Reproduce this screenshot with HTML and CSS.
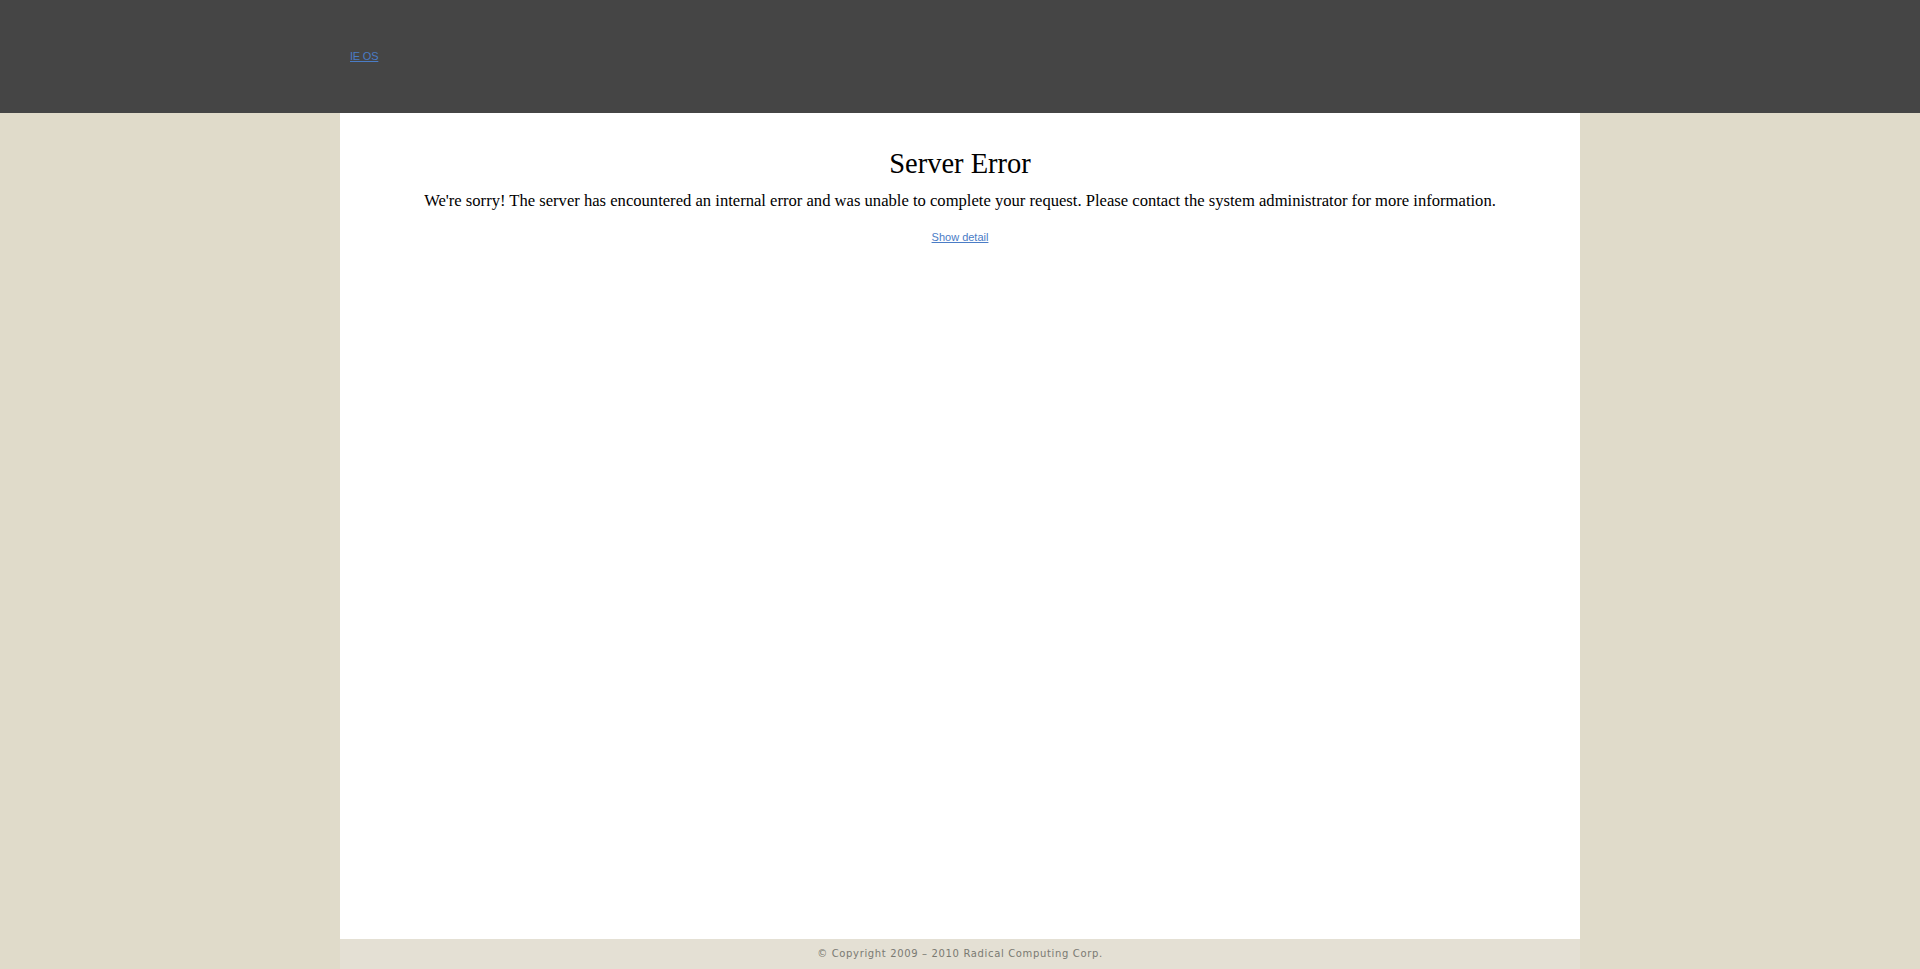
FILE: index.html
```html
<!DOCTYPE html>
<html>
<head>
<meta charset="utf-8">
<title>Server Error</title>
<link rel="stylesheet" href="styles.css">
</head>
<body>
<div class="header">
  <div class="header-inner">
    <a class="logo-link" href="#">IE OS</a>
  </div>
</div>
<div class="page">
  <h1 class="title">Server Error</h1>
  <p class="message">We're sorry! The server has encountered an internal error and was unable to complete your request. Please contact the system administrator for more information.</p>
  <a class="detail-link" href="#">Show detail</a>
</div>
<div class="footer">&copy; Copyright 2009 &ndash; 2010 Radical Computing Corp.</div>
</body>
</html>
```

FILE: styles.css
```css
html, body {
  margin: 0;
  padding: 0;
}
body {
  background: #e0dbca;
  font-family: "Liberation Sans", Arial, sans-serif;
}
.header {
  background: #454545;
  height: 113px;
}
.header-inner {
  width: 1240px;
  margin: 0 auto;
  padding: 46px 0 0 10px;
  box-sizing: border-box;
}
.logo-link {
  color: #4a7cc6;
  font-size: 11px;
  letter-spacing: -0.2px;
}
.page {
  width: 1240px;
  margin: 0 auto;
  background: #ffffff;
  height: 826px;
  box-sizing: border-box;
  padding-top: 35px;
  text-align: center;
}
.title {
  font-family: "Liberation Serif", Georgia, serif;
  font-weight: normal;
  font-size: 28.5px;
  line-height: 32px;
  margin: 0 0 11px 0;
  color: #000;
}
.message {
  font-family: "Liberation Serif", Georgia, serif;
  font-size: 16.6px;
  line-height: 20px;
  margin: 0 0 16px 0;
  color: #000;
}
.detail-link {
  color: #4a7cc6;
  font-size: 11px;
}
.footer {
  width: 1240px;
  margin: 0 auto;
  background: #e4e0d4;
  height: 30px;
  line-height: 30px;
  text-align: center;
  font-family: "DejaVu Sans", Verdana, sans-serif;
  font-size: 10px;
  color: #7a7a72;
  letter-spacing: 0.65px;
}
```
